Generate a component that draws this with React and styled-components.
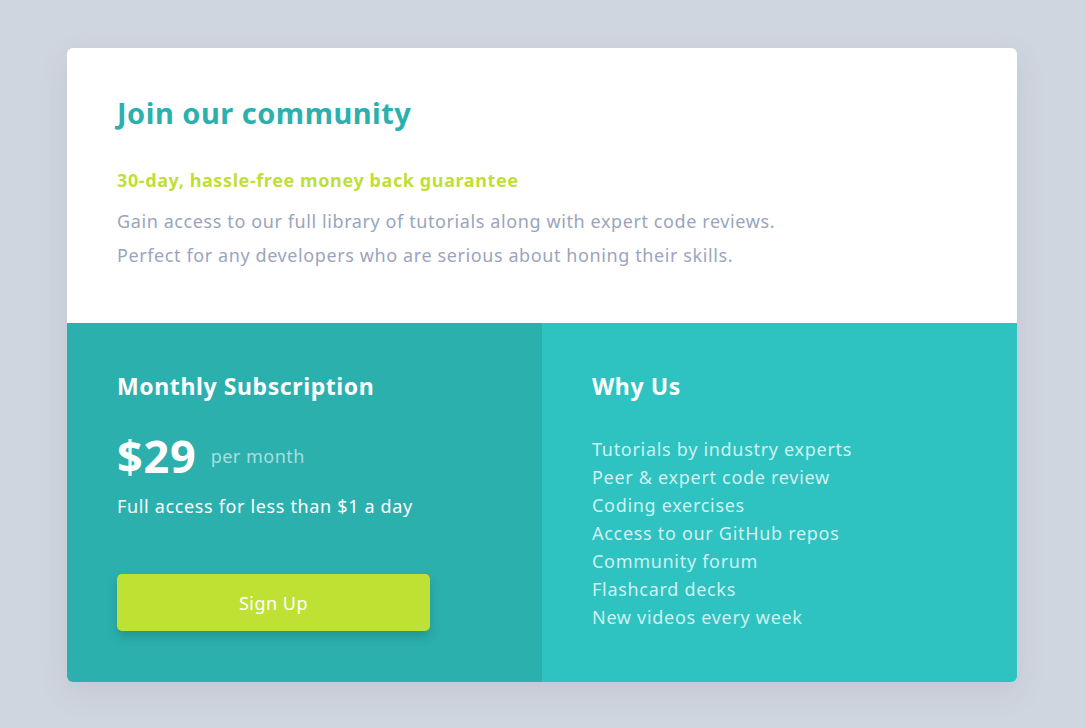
import styled, { createGlobalStyle } from "styled-components";

const GlobalStyle = createGlobalStyle`
  body {
    margin: 0;
    background: #d0d6df;
    font-family: "Noto Sans", "Open Sans", sans-serif;
  }
`;

const Page = styled.div`
  min-height: 728px;
  display: flex;
  align-items: flex-start;
  padding: 48px 0 0 67px;
  box-sizing: border-box;
`;

const Card = styled.div`
  width: 950px;
  border-radius: 6px;
  overflow: hidden;
  box-shadow: 0 10px 30px rgba(80, 100, 130, 0.12);
`;

const Top = styled.section`
  background: #fff;
  padding: 46px 50px 0;
  height: 275px;
  box-sizing: border-box;
`;

const Title = styled.h1`
  margin: 0;
  color: #2bb0ae;
  font-size: 29px;
  font-weight: 700;
  letter-spacing: 0.5px;
  line-height: 38px;
`;

const Guarantee = styled.h2`
  margin: 33px 0 0;
  color: #bfdf34;
  font-size: 18px;
  font-weight: 700;
  letter-spacing: 0.6px;
  line-height: 30px;
`;

const Text = styled.p`
  margin: 9px 0 0;
  color: #9aa5bd;
  font-size: 18px;
  letter-spacing: 0.6px;
  line-height: 34px;
`;

const Bottom = styled.div`
  display: grid;
  grid-template-columns: 1fr 1fr;
  height: 359px;
`;

const Panel = styled.section`
  background: ${(p) => p.$bg};
  padding: 46px 50px 0;
  color: #fff;
`;

const PanelTitle = styled.h3`
  margin: 0;
  font-size: 23px;
  font-weight: 700;
  letter-spacing: 0.6px;
  line-height: 34px;
`;

const PriceRow = styled.div`
  display: flex;
  align-items: center;
  gap: 14px;
  margin-top: 28px;
`;

const Price = styled.span`
  font-size: 45px;
  font-weight: 700;
  letter-spacing: 0.8px;
  line-height: 50px;
`;

const Per = styled.span`
  font-size: 18px;
  letter-spacing: 0.5px;
  color: rgba(255, 255, 255, 0.6);
`;

const Note = styled.p`
  margin: 11px 0 0;
  font-size: 18px;
  letter-spacing: 0.65px;
  line-height: 28px;
`;

const Button = styled.button`
  margin-top: 54px;
  width: 313px;
  height: 57px;
  border: none;
  border-radius: 5px;
  background: #bfe134;
  color: #fff;
  font-family: inherit;
  font-size: 18px;
  letter-spacing: 0.5px;
  box-shadow: 0 6px 10px rgba(20, 70, 70, 0.25);
  cursor: pointer;
`;

const List = styled.ul`
  list-style: none;
  margin: 32px 0 0;
  padding: 0;
`;

const Item = styled.li`
  font-size: 18px;
  letter-spacing: 0.7px;
  line-height: 28px;
  color: rgba(255, 255, 255, 0.78);
`;

const reasons = [
  "Tutorials by industry experts",
  "Peer & expert code review",
  "Coding exercises",
  "Access to our GitHub repos",
  "Community forum",
  "Flashcard decks",
  "New videos every week",
];

export default function App() {
  return (
    <Page>
      <GlobalStyle />
      <Card>
        <Top>
          <Title>Join our community</Title>
          <Guarantee>30-day, hassle-free money back guarantee</Guarantee>
          <Text>
            Gain access to our full library of tutorials along with expert code reviews.
            <br />
            Perfect for any developers who are serious about honing their skills.
          </Text>
        </Top>
        <Bottom>
          <Panel $bg="#2bb0ae">
            <PanelTitle>Monthly Subscription</PanelTitle>
            <PriceRow>
              <Price>$29</Price>
              <Per>per month</Per>
            </PriceRow>
            <Note>Full access for less than $1 a day</Note>
            <Button>Sign Up</Button>
          </Panel>
          <Panel $bg="#2ec3c1">
            <PanelTitle>Why Us</PanelTitle>
            <List>
              {reasons.map((r) => (
                <Item key={r}>{r}</Item>
              ))}
            </List>
          </Panel>
        </Bottom>
      </Card>
    </Page>
  );
}
